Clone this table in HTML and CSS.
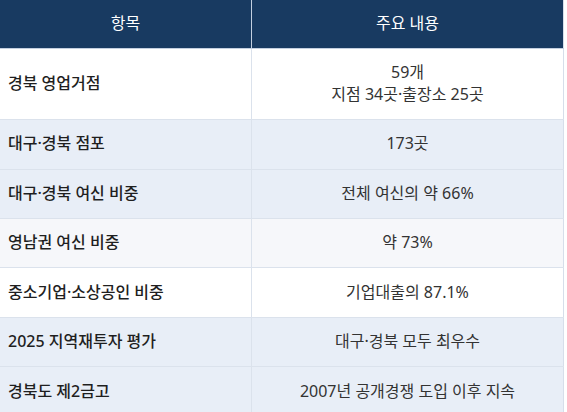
FILE: index.html
```html
<!doctype html>
<html lang="ko">
<head>
    <meta charset="UTF-8">
    <title>경북 영업 현황</title>
    <link rel="stylesheet" href="styles.css">
</head>
<body>
<table class="info">
    <thead>
    <tr>
        <th class="col-item">항목</th>
        <th class="col-desc">주요 내용</th>
    </tr>
    </thead>
    <tbody>
    <tr class="row-white">
        <td class="item">경북 영업거점</td>
        <td class="desc">59개<br>지점 34곳·출장소 25곳</td>
    </tr>
    <tr class="row-blue">
        <td class="item">대구·경북 점포</td>
        <td class="desc">173곳</td>
    </tr>
    <tr class="row-blue">
        <td class="item">대구·경북 여신 비중</td>
        <td class="desc">전체 여신의 약 66%</td>
    </tr>
    <tr class="row-grey">
        <td class="item">영남권 여신 비중</td>
        <td class="desc">약 73%</td>
    </tr>
    <tr class="row-white">
        <td class="item">중소기업·소상공인 비중</td>
        <td class="desc">기업대출의 87.1%</td>
    </tr>
    <tr class="row-blue">
        <td class="item">2025 지역재투자 평가</td>
        <td class="desc">대구·경북 모두 최우수</td>
    </tr>
    <tr class="row-blue">
        <td class="item">경북도 제2금고</td>
        <td class="desc">2007년 공개경쟁 도입 이후 지속</td>
    </tr>
    </tbody>
</table>
</body>
</html>
```

FILE: styles.css
```css
*{
    padding: 0;
    margin: 0;
}
body{
    background-color: #ffffff;
    font-family: "Noto Sans", "Noto Sans CJK KR", sans-serif;
    font-size: 16px;
    line-height: 21.6px;
    color: #222222;
}

.info{
    width: 564px;
    table-layout: fixed;
    border-collapse: collapse;
    border-right: 1px solid #d6deea;
}
.info th{
    background-color: #183a61;
    color: #ffffff;
    font-weight: 400;
    padding: 13.2px 8px;
    text-align: center;
    border-bottom: 1px solid #c3cfe0;
}
.info th + th{
    border-left: 1px solid #c3cfe0;
}
.col-item{
    width: 235px;
}
.info td{
    padding: 13.45px 8px;
    border-bottom: 1px solid #dbe2ec;
}
.info td + td{
    border-left: 1px solid #dbe2ec;
}
.item{
    font-weight: 500;
    color: #1f1f1f;
}
.desc{
    text-align: center;
    color: #333333;
}

.row-white{
    background-color: #ffffff;
}
.row-blue{
    background-color: #e8eef7;
}
.row-grey{
    background-color: #f6f7fa;
}
```
